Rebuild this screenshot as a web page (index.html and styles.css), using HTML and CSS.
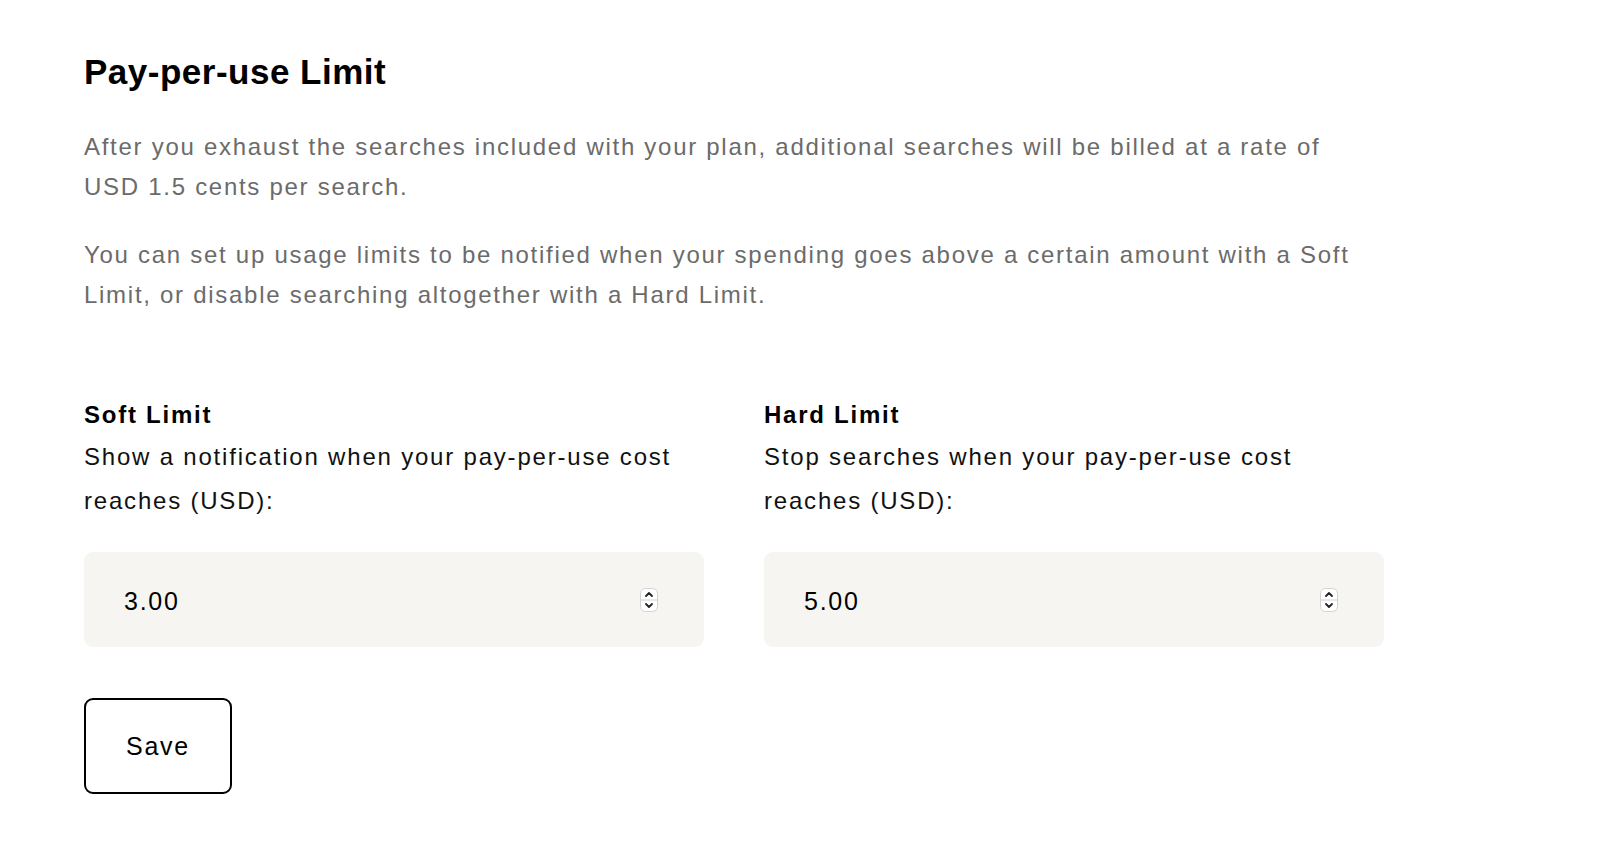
FILE: index.html
```html
<!DOCTYPE html>
<html lang="en">
<head>
<meta charset="utf-8">
<title>Pay-per-use Limit</title>
<link rel="stylesheet" href="styles.css">
</head>
<body>
<main class="page">
  <h1 class="title">Pay-per-use Limit</h1>
  <p class="intro">After you exhaust the searches included with your plan, additional searches will be billed at a rate of USD 1.5 cents per search.</p>
  <p class="intro intro-second">You can set up usage limits to be notified when your spending goes above a certain amount with a Soft Limit, or disable searching altogether with a Hard Limit.</p>

  <form class="limits">
    <div class="limit-grid">
      <div class="field">
        <div class="field-label">Soft Limit</div>
        <div class="field-desc">Show a notification when your pay-per-use cost reaches (USD):</div>
        <div class="input-box">
          <input class="input-value" type="text" value="3.00">
          <span class="stepper">
            <svg width="18" height="24" viewBox="0 0 18 24">
              <rect x="0.5" y="0.5" width="17" height="23" rx="5" fill="#fff" stroke="#d2d2d2"/>
              <line x1="0.5" y1="12" x2="17.5" y2="12" stroke="#d2d2d2"/>
              <path d="M6 8 L9 5 L12 8" fill="none" stroke="#222" stroke-width="1.8" stroke-linecap="round" stroke-linejoin="round"/>
              <path d="M6 16 L9 19 L12 16" fill="none" stroke="#222" stroke-width="1.8" stroke-linecap="round" stroke-linejoin="round"/>
            </svg>
          </span>
        </div>
      </div>
      <div class="field">
        <div class="field-label">Hard Limit</div>
        <div class="field-desc">Stop searches when your pay-per-use cost reaches (USD):</div>
        <div class="input-box">
          <input class="input-value" type="text" value="5.00">
          <span class="stepper">
            <svg width="18" height="24" viewBox="0 0 18 24">
              <rect x="0.5" y="0.5" width="17" height="23" rx="5" fill="#fff" stroke="#d2d2d2"/>
              <line x1="0.5" y1="12" x2="17.5" y2="12" stroke="#d2d2d2"/>
              <path d="M6 8 L9 5 L12 8" fill="none" stroke="#222" stroke-width="1.8" stroke-linecap="round" stroke-linejoin="round"/>
              <path d="M6 16 L9 19 L12 16" fill="none" stroke="#222" stroke-width="1.8" stroke-linecap="round" stroke-linejoin="round"/>
            </svg>
          </span>
        </div>
      </div>
    </div>
    <button class="save-btn" type="button">Save</button>
  </form>
</main>
</body>
</html>
```

FILE: styles.css
```css
* {
  box-sizing: border-box;
}

html, body {
  margin: 0;
  padding: 0;
  background: #ffffff;
}

body {
  font-family: "Liberation Sans", Arial, Helvetica, sans-serif;
  color: #000;
}

.page {
  padding: 52px 0 40px 84px;
  width: 1384px;
}

.title {
  margin: 0;
  font-size: 35px;
  line-height: 40px;
  font-weight: 700;
  letter-spacing: 0.5px;
  color: #000;
}

.intro {
  margin: 35px 0 0;
  max-width: 1285px;
  font-size: 24px;
  line-height: 40px;
  letter-spacing: 1.72px;
  color: #6b6b6b;
}

.intro-second {
  margin-top: 28px;
}

.limits {
  margin-top: 80px;
}

.limit-grid {
  display: grid;
  grid-template-columns: 620px 620px;
  column-gap: 60px;
}

.field {
  display: flex;
  flex-direction: column;
}

.field-label {
  font-size: 24px;
  font-weight: 700;
  line-height: 40px;
  letter-spacing: 1.75px;
  color: #000;
}

.field-desc {
  margin-top: 0;
  font-size: 24px;
  line-height: 44px;
  letter-spacing: 1.8px;
  color: #111;
}

.input-box {
  margin-top: 29px;
  height: 95px;
  background: #f6f5f2;
  border-radius: 9px;
  display: flex;
  align-items: center;
  padding: 0 46px 0 40px;
}

.input-value {
  flex: 1;
  min-width: 0;
  border: 0;
  outline: none;
  background: transparent;
  font-family: "Liberation Sans", Arial, Helvetica, sans-serif;
  font-size: 25px;
  letter-spacing: 1.75px;
  color: #000;
  padding: 0;
  margin: 3px 0 0;
}

.stepper {
  display: flex;
  width: 18px;
  height: 24px;
}

.save-btn {
  margin-top: 51px;
  width: 148px;
  height: 96px;
  border: 2px solid #000;
  border-radius: 9px;
  background: #fff;
  font-family: "Liberation Sans", Arial, Helvetica, sans-serif;
  font-size: 25px;
  letter-spacing: 1.75px;
  color: #000;
  padding: 0;
  cursor: pointer;
}
```
